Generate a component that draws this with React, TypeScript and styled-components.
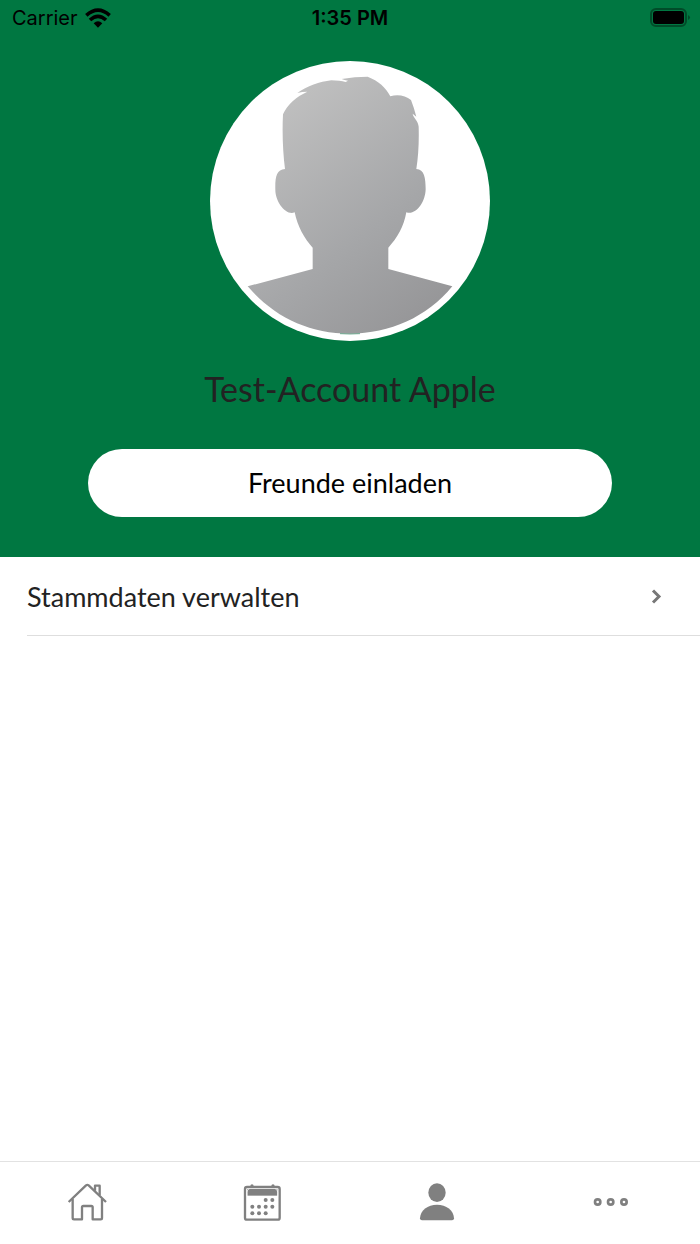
import React from "react";
import styled, { createGlobalStyle } from "styled-components";

const GlobalStyle = createGlobalStyle`
  * { box-sizing: border-box; }
  body { margin: 0; background: #fff; font-family: Lato, "Liberation Sans", sans-serif; }
`;

const Screen = styled.div`
  min-height: 100vh;
  display: flex;
  flex-direction: column;
`;

const Header = styled.header`
  background: #007741;
  padding-bottom: 40px;
`;

const StatusBar = styled.div`
  height: 36px;
  padding: 0 9px;
  display: grid;
  grid-template-columns: 1fr auto 1fr;
  align-items: center;
  color: #000;
  font-family: Inter, "Liberation Sans", sans-serif;
  font-size: 20px;
  line-height: 24px;
`;

const Network = styled.div`
  display: flex;
  align-items: center;
  gap: 7px;
  padding-left: 3px;
`;

const Clock = styled.time`
  font-weight: 600;
`;

const Battery = styled.svg`
  justify-self: end;
`;

const Profile = styled.section`
  display: flex;
  flex-direction: column;
  align-items: center;
  padding: 25px 88px 0;
`;

const Avatar = styled.svg`
  display: block;
  width: 280px;
  height: 280px;
  border-radius: 50%;
  background: #fff;
`;

const Name = styled.h1`
  margin: 28px 0 40px;
  color: #222;
  font-size: 34px;
  font-weight: 400;
  line-height: 40px;
  text-align: center;
`;

const InviteButton = styled.button`
  width: 100%;
  height: 68px;
  border: 0;
  border-radius: 34px;
  background: #fff;
  color: #000;
  font-family: inherit;
  font-size: 27px;
  line-height: 32px;
  cursor: pointer;
`;

const Menu = styled.main`
  flex: 1;
  padding-left: 27px;
`;

const MenuLink = styled.a`
  display: flex;
  align-items: center;
  justify-content: space-between;
  height: 79px;
  padding: 2px 38px 0 0;
  border-bottom: 1px solid #dedede;
  color: #222;
  font-size: 27px;
  line-height: 32px;
  text-decoration: none;
`;

const TabBar = styled.nav`
  display: grid;
  grid-template-columns: repeat(4, 1fr);
  border-top: 1px solid #e2e2e2;
`;

const Tab = styled.a`
  display: flex;
  justify-content: center;
  padding: 20px 0 21px;
  color: #808080;
`;

const TabIcon = styled.svg`
  display: block;
  width: 41px;
  height: 41px;
`;

const calendarDots = [
  [122, 105], [142, 105],
  [82, 125], [102, 125], [122, 125], [142, 125],
  [82, 145], [102, 145], [122, 145],
];

export default function App() {
  return (
    <Screen>
      <GlobalStyle />
      <Header>
        <StatusBar>
          <Network>
            <span>Carrier</span>
            <svg width="26" height="20" viewBox="0 0 78 60" aria-label="WLAN">
              <g fill="none" stroke="#000" strokeWidth="11">
                <path d="M4 22Q39-9 74 22" />
                <path d="M15 36Q39 14 63 36" />
              </g>
              <path d="M26 46Q39 34 52 46L39 59Z" />
            </svg>
          </Network>
          <Clock>1:35 PM</Clock>
          <Battery width="41" height="20" viewBox="0 0 41 20" aria-label="Akku">
            <rect x="1" y="1" width="35" height="17" rx="5" fill="none" stroke="#004c29" strokeWidth="2" />
            <rect x="3" y="3" width="31" height="13" rx="3" />
            <path d="M38 7Q42 9.500 38 12Z" fill="#004c29" />
          </Battery>
        </StatusBar>
        <Profile>
          <Avatar viewBox="30 33 840 840" role="img" aria-label="Profilbild">
            <defs>
              <linearGradient id="silhouette" gradientUnits="userSpaceOnUse" x1="190" y1="180" x2="680" y2="820">
                <stop offset="0" stopColor="#c0c0c0" />
                <stop offset="0.6" stopColor="#a5a6a8" />
                <stop offset="1" stopColor="#959597" />
              </linearGradient>
            </defs>
            <path
              fill="url(#silhouette)"
              d="M143 709L338 657V593C313 566 292 528 284 487C258 498 226 456 226 420C225 382 229 359 255 357C249 310 246 251 249 193C262 163 291 139 322 125Q306 125 292 129C321 109 359 95 394 91Q420 91 437 96L444 92Q433 90 425 87Q465 80 503 80C535 92 558 113 571 139C595 131 617 138 633 150Q642 173 649 200L638 191C639 202 655 213 656 230Q658 300 649 357C673 358 677 384 677 418C676 458 647 497 619 487C612 528 592 564 565 593V657L757 709C680 802 570 851 450 851C325 851 221 800 143 709Z"
            />
            <path d="M420 851Q450 853 480 851" fill="none" stroke="#2f8a62" strokeWidth="2" />
          </Avatar>
          <Name>Test-Account Apple</Name>
          <InviteButton type="button">Freunde einladen</InviteButton>
        </Profile>
      </Header>
      <Menu>
        <MenuLink href="#stammdaten">
          Stammdaten verwalten
          <svg width="11" height="16" viewBox="0 0 11 16" aria-hidden="true">
            <path d="M2 1.500L8 7.500L2 13.500" fill="none" stroke="#777" strokeWidth="3" />
          </svg>
        </MenuLink>
      </Menu>
      <TabBar>
        <Tab href="#start" aria-label="Start">
          <TabIcon viewBox="51 96 123 123" fill="none" stroke="currentColor" strokeWidth="7" strokeLinejoin="round">
            <path d="M56 156L108 106Q112 103 116 106L168 156" />
            <path d="M68 147V204Q68 208 72 208H96V172Q96 168 100 168H124Q128 168 128 172V208H152Q156 208 156 204V147" />
            <path d="M135 122V107H149V136" />
          </TabIcon>
        </Tab>
        <Tab href="#kalender" aria-label="Kalender">
          <TabIcon viewBox="51 51 123 123" fill="currentColor">
            <rect x="60" y="66" width="104" height="98" rx="6" fill="none" stroke="currentColor" strokeWidth="7" />
            <path d="M67 72H157V92H67Z" />
            <path d="M66 95V82Q66 73 73 72M158 95V82Q158 73 151 72" fill="none" stroke="#fff" strokeWidth="2" />
            <circle cx="81" cy="63" r="5" />
            <circle cx="144" cy="63" r="5" />
            {calendarDots.map(([x, y]) => (
              <circle key={`${x}-${y}`} cx={x} cy={y} r="6" />
            ))}
          </TabIcon>
        </Tab>
        <Tab href="#profil" aria-label="Profil" aria-current="page">
          <TabIcon viewBox="51 51 123 123" fill="currentColor">
            <ellipse cx="111" cy="83" rx="26" ry="28" />
            <path d="M60 160C61 135 83 119 111 119S161 135 162 160Q162 166 156 166H66Q60 166 60 160Z" />
          </TabIcon>
        </Tab>
        <Tab href="#mehr" aria-label="Mehr">
          <TabIcon viewBox="36 6 123 123" fill="none" stroke="currentColor" strokeWidth="8">
            <circle cx="53" cy="66" r="8" />
            <circle cx="92" cy="66" r="8" />
            <circle cx="132" cy="66" r="8" />
          </TabIcon>
        </Tab>
      </TabBar>
    </Screen>
  );
}
